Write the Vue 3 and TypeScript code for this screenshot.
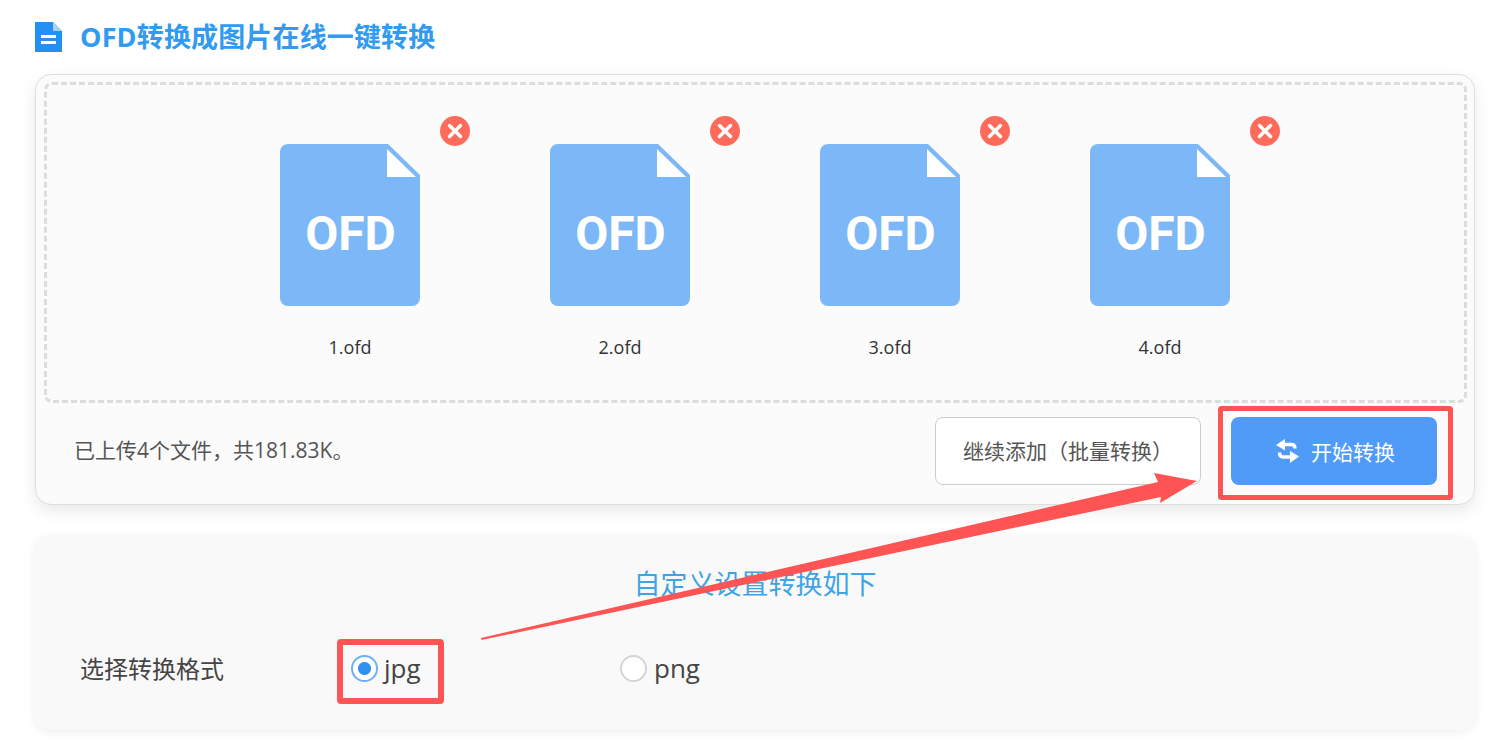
<script setup lang="ts">
const files = ['1.ofd', '2.ofd', '3.ofd', '4.ofd']
</script>

<template>
  <div class="page">
    <h1 class="title">
      <svg class="title-icon" width="27" height="30" viewBox="0 0 27 30">
        <path d="M0 0H18L27 9V30H0Z" fill="#2590f3" />
        <path d="M18 0L27 9H18Z" fill="#a9d2fa" />
        <rect x="6" y="13" width="15" height="3" fill="#fff" />
        <rect x="6" y="19" width="15" height="3" fill="#fff" />
      </svg>
      <span class="title-text">OFD转换成图片在线一键转换</span>
    </h1>

    <section class="upload-card">
      <div class="dropzone">
        <div v-for="name in files" :key="name" class="file">
          <svg class="file-icon" width="140" height="162" viewBox="0 0 140 162">
            <path d="M8 0H108L140 31V154a8 8 0 0 1-8 8H8a8 8 0 0 1-8-8V8a8 8 0 0 1 8-8Z" fill="#7cb8f7" />
            <path d="M107 5L136 33H107Z" fill="#fff" />
          </svg>
          <span class="file-type">OFD</span>
          <svg class="remove" width="30" height="30" viewBox="0 0 30 30">
            <circle cx="15" cy="15" r="15" fill="#ff6b5a" />
            <path d="M9.5 9.5L20.5 20.5M20.5 9.5L9.5 20.5" stroke="#fff" stroke-width="3.4" stroke-linecap="round" />
          </svg>
          <div class="file-name">{{ name }}</div>
        </div>
      </div>
      <div class="actions">
        <p class="summary">已上传4个文件，共181.83K。</p>
        <button class="btn btn-add">继续添加（批量转换）</button>
        <button class="btn btn-start">
          <svg width="23" height="24" viewBox="0 0 23 24" fill="none" stroke="#fff" stroke-width="3.4">
            <path d="M0 6L9 0V11.5Z" fill="#fff" stroke="none" />
            <path d="M8 5.5H15.5Q19 5.5 19 9.5" />
            <path d="M23 17.5L14 12V24Z" fill="#fff" stroke="none" />
            <path d="M15 18H7Q3.5 18 3.5 13.5" />
          </svg>
          <span>开始转换</span>
        </button>
      </div>
    </section>

    <section class="settings-card">
      <h2 class="settings-title">自定义设置转换如下</h2>
      <div class="format-row">
        <span class="format-label">选择转换格式</span>
        <label class="radio radio-jpg">
          <span class="dot checked"></span>
          <span class="radio-text">jpg</span>
        </label>
        <label class="radio">
          <span class="dot"></span>
          <span class="radio-text">png</span>
        </label>
      </div>
    </section>

    <!-- red markup drawn on top of the screenshot -->
    <svg class="markup" width="1503" height="741" viewBox="0 0 1503 741">
      <rect x="1220.5" y="408.5" width="230" height="89" rx="1" fill="none" stroke="#ff5454" stroke-width="5" />
      <rect x="340" y="642" width="101" height="59" rx="1" fill="none" stroke="#ff5454" stroke-width="6" />
      <path d="M481 638L1158 482L1154 473L1197 481L1160 503L1161 497L481.5 640Z" fill="#ff5454" />
    </svg>
  </div>
</template>

<style scoped>
.page {
  position: relative;
  width: 1503px;
  height: 741px;
  overflow: hidden;
  box-sizing: border-box;
  padding: 22px 28px 0 35px;
  background: #fff;
  font-family: "Open Sans", "Noto Sans CJK SC", sans-serif;
}

.title {
  display: flex;
  align-items: center;
  gap: 18px;
  height: 30px;
  margin: 0 0 22px;
  font-size: 27px;
  font-weight: 700;
  letter-spacing: 0.15px;
  color: #329bf0;
  white-space: nowrap;
}

.title-icon {
  flex: none;
}

.title-text {
  padding-bottom: 4px;
}

.upload-card {
  box-sizing: border-box;
  height: 431px;
  padding: 7px 7px 0 8px;
  background: #fbfbfb;
  border: 1px solid #dedede;
  border-radius: 16px;
  box-shadow: 0 6px 16px rgba(0, 0, 0, 0.09);
}

.dropzone {
  box-sizing: border-box;
  display: flex;
  gap: 130px;
  height: 321px;
  padding: 59px 0 0 233px;
  border: 3px dashed #dcdcdc;
  border-radius: 8px;
}

.file {
  position: relative;
  width: 140px;
}

.file-icon {
  display: block;
}

.file-type {
  position: absolute;
  left: 1px;
  right: 0;
  top: 60px;
  text-align: center;
  font-family: Roboto, sans-serif;
  font-size: 48px;
  line-height: 60px;
  font-weight: 700;
  color: #fff;
}

.remove {
  position: absolute;
  left: 160px;
  top: -28px;
}

.file-name {
  margin-top: 29px;
  text-align: center;
  font-size: 18px;
  line-height: 24px;
  color: #333;
}

.actions {
  display: flex;
  align-items: flex-start;
  padding: 14px 30px 0 30px;
}

.summary {
  flex: 1;
  margin: 0;
  font-size: 21px;
  line-height: 66px;
  color: #555;
}

.btn {
  box-sizing: border-box;
  height: 68px;
  border-radius: 8px;
  font-family: inherit;
  white-space: nowrap;
}

.btn-add {
  width: 266px;
  margin-right: 30px;
  padding: 0 0 2px;
  background: #fff;
  border: 1px solid #ccc;
  font-size: 21px;
  color: #555;
}

.btn-start {
  display: flex;
  align-items: center;
  justify-content: center;
  gap: 12px;
  width: 206px;
  padding: 0 0 0 3px;
  background: #4f9bf7;
  border: none;
  font-size: 21px;
  color: #fff;
}

.settings-card {
  box-sizing: border-box;
  height: 194px;
  margin-top: 31px;
  padding-top: 28px;
  background: #f9f9f9;
  border-radius: 14px;
  box-shadow: 0 2px 10px rgba(0, 0, 0, 0.07);
}

.settings-title {
  margin: 0;
  text-align: center;
  font-size: 27px;
  line-height: 40px;
  font-weight: 400;
  color: #3fa3e6;
}

.format-row {
  display: flex;
  align-items: center;
  height: 40px;
  margin-top: 44px;
  padding-left: 45px;
  font-size: 24px;
  color: #444;
}

.format-label {
  width: 271px;
  padding-bottom: 2px;
}

.radio {
  display: flex;
  align-items: center;
  gap: 7px;
}

.radio-jpg {
  gap: 6px;
  width: 269px;
}

.radio-text {
  font-size: 26px;
}

.dot {
  box-sizing: border-box;
  width: 27px;
  height: 27px;
  background: #fff;
  border: 2px solid #d4d4d4;
  border-radius: 50%;
}

.dot.checked {
  border-color: #6db0f5;
  background: radial-gradient(circle, #2f90f0 0 6px, #fff 7px);
}

.markup {
  position: absolute;
  left: 0;
  top: 0;
  pointer-events: none;
}
</style>
